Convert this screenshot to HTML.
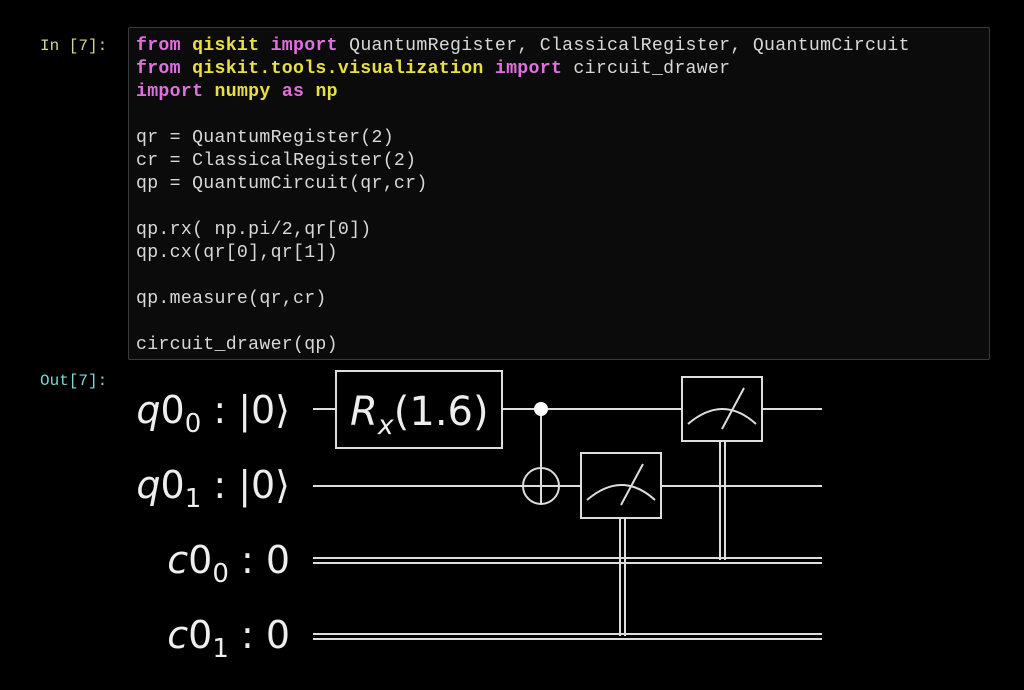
<!DOCTYPE html>
<html><head><meta charset="utf-8"><style>
body{margin:0;background:#000;width:1024px;height:690px;overflow:hidden;position:relative;font-family:"Liberation Mono",monospace}
.cell{position:absolute;left:128px;top:27px;width:862px;height:333px;background:#0b0b0b;border:1px solid #3a3a3a;border-radius:2px;box-sizing:border-box}
pre{margin:0;position:absolute;left:136px;top:35px;font-family:"Liberation Mono",monospace;font-size:18.2px;line-height:23px;color:#d8d8d8;letter-spacing:0.3px}
.k{color:#e070e0;font-weight:bold}.m{color:#e8e040;font-weight:bold}
.p{position:absolute;font-size:16px}
</style></head><body>
<div class="cell"></div>
<div class="p" style="left:40px;top:37px;color:#d6d68a">In [7]:</div>
<pre><span class="k">from</span> <span class="m">qiskit</span> <span class="k">import</span> QuantumRegister, ClassicalRegister, QuantumCircuit
<span class="k">from</span> <span class="m">qiskit.tools.visualization</span> <span class="k">import</span> circuit_drawer
<span class="k">import</span> <span class="m">numpy</span> <span class="k">as</span> <span class="m">np</span>

qr = QuantumRegister(2)
cr = ClassicalRegister(2)
qp = QuantumCircuit(qr,cr)

qp.rx( np.pi/2,qr[0])
qp.cx(qr[0],qr[1])

qp.measure(qr,cr)

circuit_drawer(qp)</pre>
<div class="p" style="left:40px;top:372px;color:#7fd6d6">Out[7]:</div>
<svg width="1024" height="690" style="position:absolute;left:0;top:0" font-family="DejaVu Sans, Liberation Sans, sans-serif" fill="#eee">
<g font-size="38" text-anchor="end" fill="#eee">
<text x="290" y="423"><tspan font-style="italic">q</tspan>0<tspan font-size="26" dy="9">0</tspan><tspan dy="-9"> : |0⟩</tspan></text>
<text x="290" y="498"><tspan font-style="italic">q</tspan>0<tspan font-size="26" dy="9">1</tspan><tspan dy="-9"> : |0⟩</tspan></text>
<text x="290" y="573"><tspan font-style="italic">c</tspan>0<tspan font-size="26" dy="9">0</tspan><tspan dy="-9"> : 0</tspan></text>
<text x="290" y="648"><tspan font-style="italic">c</tspan>0<tspan font-size="26" dy="9">1</tspan><tspan dy="-9"> : 0</tspan></text>
</g>
<g stroke="#ddd" stroke-width="2" fill="none">
<line x1="313" y1="409" x2="822" y2="409"/>
<line x1="313" y1="486" x2="822" y2="486"/>
<line x1="313" y1="558" x2="822" y2="558"/><line x1="313" y1="563" x2="822" y2="563"/>
<line x1="313" y1="634" x2="822" y2="634"/><line x1="313" y1="639" x2="822" y2="639"/>
<rect x="336" y="371" width="166" height="77" fill="#000"/>
<line x1="541" y1="409" x2="541" y2="504"/>
<circle cx="541" cy="486" r="18" fill="#000"/>
<line x1="523" y1="486" x2="559" y2="486"/><line x1="541" y1="468" x2="541" y2="504"/>
<line x1="620" y1="518" x2="620" y2="636"/><line x1="625" y1="518" x2="625" y2="636"/>
<line x1="720" y1="441" x2="720" y2="560"/><line x1="725" y1="441" x2="725" y2="560"/>
<rect x="581" y="453" width="80" height="65" fill="#000"/>
<path d="M587 500 Q622 470 655 500 M621 505 L643 464"/>
<rect x="682" y="377" width="80" height="64" fill="#000"/>
<path d="M688 424 Q723 394 756 424 M722 429 L744 388"/>
</g>
<circle cx="541" cy="409" r="7" fill="#fff"/>
<text x="350" y="425" font-size="40" fill="#eee"><tspan font-style="italic">R</tspan><tspan font-style="italic" font-size="27" dy="9">x</tspan><tspan dy="-9">(1.6)</tspan></text>
</svg>
</body></html>
